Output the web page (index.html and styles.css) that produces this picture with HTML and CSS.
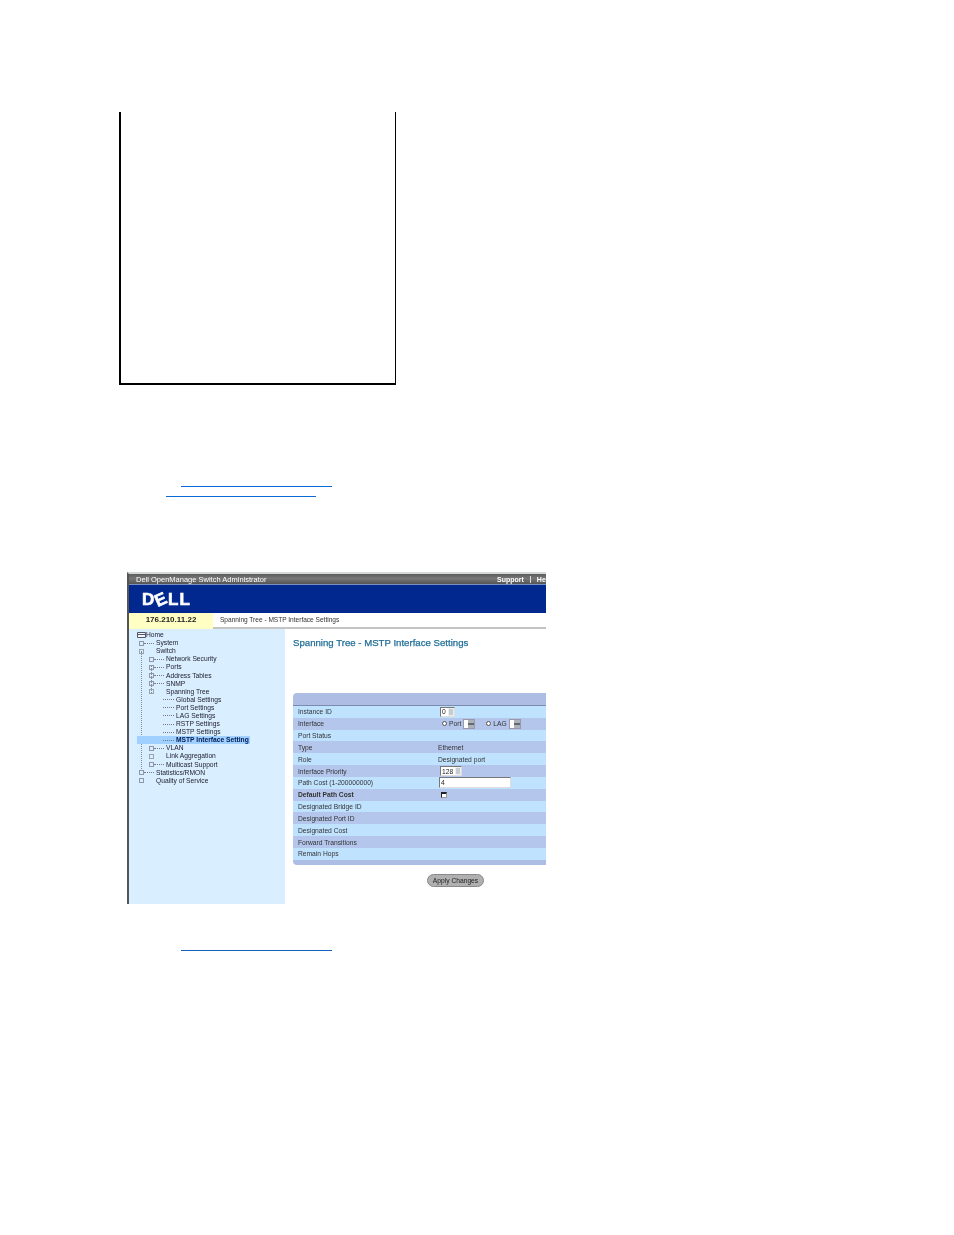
FILE: index.html
```html
<!DOCTYPE html>
<html lang="en">
<head>
<meta charset="utf-8">
<title>Spanning Tree - MSTP Interface Settings</title>
<link rel="stylesheet" href="styles.css">
</head>
<body>
<div class="box"></div>
<a class="rule rule-a" href="#top"></a>
<a class="rule rule-b" href="#top"></a>
<div class="shot">
  <div class="titlebar">
    <span>Dell OpenManage Switch Administrator</span>
    <span class="support">Support <i class="sep"></i> Help</span>
  </div>
  <div class="brand"><span class="logo">D<span class="logo-e">E</span>LL</span></div>
  <div class="crumbrow">
    <div class="ip">176.210.11.22</div>
    <div class="crumb">Spanning Tree - MSTP Interface Settings</div>
  </div>
  <div class="workspace">
    <nav class="tree">
      <i class="vline vline-a"></i>
      <i class="vline vline-b"></i>
      <div class="node home"><svg class="folder" width="9" height="6" viewBox="0 0 9 6"><path d="M.5.5h8v5h-8z" fill="#eef6ff" stroke="#556"/><path d="M.5 2.5h8" stroke="#556"/></svg>Home</div>
      <div class="node l1"><i class="plus"></i><i class="dash"></i>System</div>
      <div class="node l1"><i class="plus open"></i><i class="gap"></i>Switch</div>
      <div class="node l2"><i class="plus"></i><i class="dash"></i>Network Security</div>
      <div class="node l2"><i class="plus"></i><i class="dash"></i>Ports</div>
      <div class="node l2"><i class="plus"></i><i class="dash"></i>Address Tables</div>
      <div class="node l2"><i class="plus"></i><i class="dash"></i>SNMP</div>
      <div class="node l2"><i class="plus open"></i><i class="gap"></i>Spanning Tree</div>
      <div class="node l3"><i class="dash long"></i>Global Settings</div>
      <div class="node l3"><i class="dash long"></i>Port Settings</div>
      <div class="node l3"><i class="dash long"></i>LAG Settings</div>
      <div class="node l3"><i class="dash long"></i>RSTP Settings</div>
      <div class="node l3"><i class="dash long"></i>MSTP Settings</div>
      <div class="node l3 current"><i class="dash long"></i>MSTP Interface Setting</div>
      <div class="node l2"><i class="plus"></i><i class="dash"></i>VLAN</div>
      <div class="node l2"><i class="plus open"></i><i class="gap"></i>Link Aggregation</div>
      <div class="node l2"><i class="plus"></i><i class="dash"></i>Multicast Support</div>
      <div class="node l1"><i class="plus"></i><i class="dash"></i>Statistics/RMON</div>
      <div class="node l1"><i class="plus"></i><i class="gap"></i>Quality of Service</div>
    </nav>
    <main class="content">
      <h1 class="heading">Spanning Tree - MSTP Interface Settings</h1>
      <section class="panel">
        <div class="panel-head"></div>
        <div class="row"><span class="label">Instance ID</span><span class="value"><span class="spin">0<i class="arrow"></i></span></span></div>
        <div class="row alt"><span class="label">Interface</span><span class="value"><i class="radio"></i>Port<i class="select"></i><i class="radio second"></i>LAG<i class="select"></i></span></div>
        <div class="row"><span class="label">Port Status</span><span class="value"></span></div>
        <div class="row alt"><span class="label">Type</span><span class="value">Ethernet</span></div>
        <div class="row"><span class="label">Role</span><span class="value">Designated port</span></div>
        <div class="row alt"><span class="label">Interface Priority</span><span class="value"><span class="spin">128<i class="arrow"></i></span></span></div>
        <div class="row"><span class="label">Path Cost (1-200000000)</span><span class="value"><span class="field">4</span></span></div>
        <div class="row alt"><span class="label bold">Default Path Cost</span><span class="value"><i class="check"></i></span></div>
        <div class="row"><span class="label">Designated Bridge ID</span><span class="value"></span></div>
        <div class="row alt"><span class="label">Designated Port ID</span><span class="value"></span></div>
        <div class="row"><span class="label">Designated Cost</span><span class="value"></span></div>
        <div class="row alt"><span class="label">Forward Transitions</span><span class="value"></span></div>
        <div class="row"><span class="label">Remain Hops</span><span class="value"></span></div>
        <div class="panel-foot"></div>
      </section>
      <div class="actions"><button class="apply" type="button">Apply Changes</button></div>
    </main>
  </div>
</div>
<a class="rule rule-c" href="#top"></a>
</body>
</html>
```

FILE: styles.css
```css
* { box-sizing: border-box; }
html, body { margin: 0; padding: 0; background: #fff; }
body { height: 1235px; overflow: hidden; font-family: "Liberation Sans", Arial, sans-serif; }

.box {
  width: 277px;
  height: 273px;
  margin: 112px 0 0 119px;
  border: solid #000;
  border-width: 0 1.5px 2px 2px;
}

.rule { display: block; height: 1px; background: #0a6ad8; }
.rule-a { width: 151px; margin: 101px 0 0 181px; }
.rule-b { width: 150px; margin: 9px 0 0 166px; }
.rule-c { width: 151px; margin: 46px 0 0 181px; background: #1560b8; }

.shot {
  width: 419px;
  height: 332px;
  margin: 75px 0 0 127px;
  overflow: hidden;
  border-top: 2px solid #d4d8d8;
  border-left: 2px solid #555;
  filter: blur(.4px);
  display: flex;
  flex-direction: column;
}

.titlebar {
  height: 10px;
  flex: none;
  display: flex;
  justify-content: space-between;
  align-items: center;
  padding-left: 7px;
  background: linear-gradient(#5d5d5d, #777 45%, #555);
  color: #fff;
  font-size: 7.5px;
  white-space: nowrap;
}
.support { margin-right: -6px; font-weight: bold; font-size: 7px; }
.sep { display: inline-block; width: 1px; height: 7px; margin: 0 4px; background: #ddd; vertical-align: -1px; }

.brand {
  height: 29px;
  flex: none;
  display: flex;
  align-items: center;
  padding-left: 13px;
  background: #00288f;
  border-top: 1px solid #7d8fc0;
}
.logo { color: #fff; font-size: 17px; font-weight: 900; letter-spacing: 1.2px; line-height: 1; -webkit-text-stroke: .6px #fff; }
.logo-e { display: inline-block; transform: rotate(-24deg); }

.crumbrow { height: 16px; flex: none; display: flex; }
.ip {
  width: 84px;
  background: #ffffc4;
  text-align: center;
  font-size: 8px;
  font-weight: bold;
  line-height: 13px;
  color: #222;
}
.crumb {
  flex: 1;
  padding-left: 7px;
  font-size: 6.55px;
  line-height: 14px;
  color: #333;
  border-bottom: 2px solid #c4c4c4;
}

.workspace { flex: 1; display: flex; min-height: 0; }

.tree {
  width: 156px;
  flex: none;
  padding-top: 2px;
  background: #d9eeff;
  position: relative;
  font-size: 6.7px;
  color: #223;
}
.vline { position: absolute; width: 0; border-left: 1px dotted #889; }
.vline-a { left: 12px; top: 22px; height: 120px; }
.vline-b { left: 22px; top: 36px; height: 28px; }

.node { height: 8.1px; line-height: 8px; display: flex; align-items: center; white-space: nowrap; position: relative; }
.home { padding-left: 8px; }
.folder { flex: none; }
.l1 { padding-left: 10px; }
.l2 { padding-left: 20px; }
.l3 { padding-left: 34px; }
.current { margin-left: 8px; padding-left: 26px; width: 113px; background: #9fd0ff; font-weight: bold; color: #001a55; }

.plus { width: 5px; height: 5px; flex: none; border: 1px solid #8f98a8; background: transparent; }
.plus.open { border-color: #9aa3b0; }
.dash { width: 10px; height: 0; margin: 0 2px 0 0; flex: none; border-top: 1px dotted #778; }
.dash.long { width: 11px; margin-right: 2px; }
.gap { width: 12px; flex: none; }

.content { flex: 1; min-width: 0; background: #fff; padding-left: 8px; }
.heading {
  margin: 8px 0 0;
  font-size: 9.65px;
  line-height: 12px;
  font-weight: normal;
  color: #1f6e96;
  -webkit-text-stroke: .25px #1f6e96;
  white-space: nowrap;
}

.panel {
  width: 270px;
  margin-top: 44px;
  border-radius: 4px 0 0 4px;
  overflow: hidden;
  font-size: 6.7px;
  color: #333;
}
.panel-head { height: 13px; background: #adbde4; border-bottom: 1px solid #7b8bb0; }
.panel-foot { height: 5px; background: #adbde4; }

.row { height: 11.83px; display: flex; align-items: center; background: #bfe3ff; }
.row.alt { background: #b4c6ec; }
.label { width: 145px; flex: none; padding-left: 5px; white-space: nowrap; }
.bold { font-weight: bold; }
.value { display: flex; align-items: center; white-space: nowrap; }

.spin, .field {
  display: inline-flex;
  align-items: center;
  background: #fff;
  height: 10px;
  margin-left: 2px;
  border: 1px solid #777;
  border-right-color: #ddd;
  border-bottom-color: #ddd;
  padding-left: 1px;
  color: #222;
}
.arrow {
  width: 6px;
  height: 8px;
  margin-left: 2px;
  border: 1px solid #eee;
  background: linear-gradient(#c4cdd2 42%, #778 42%, #778 58%, #c4cdd2 58%);
}
.field { width: 72px; height: 11px; margin-left: 1px; }
.radio { width: 5px; height: 5px; margin: 0 2px 0 4px; border-radius: 50%; background: #fff; border: 1px solid #555; }
.radio.second { margin-left: 11px; }
.select {
  width: 12px;
  height: 10px;
  margin-left: 2px;
  border: 1px solid #99a;
  background:
    linear-gradient(90deg, #fff 4px, transparent 4px),
    linear-gradient(#aab4b8 42%, #667 42%, #667 58%, #aab4b8 58%);
}
.check { width: 6px; height: 6px; margin-left: 3px; background: #fff; border: solid #222; border-width: 2px 1px 1px 1px; border-right-color: #999; border-bottom-color: #999; }

.actions { width: 270px; display: flex; padding: 9px 0 0 134px; }
.apply {
  width: 57px;
  height: 13px;
  padding: 0;
  border: 1px solid #8a8a8a;
  border-radius: 7px;
  background: #b0b0b0;
  font: 6.7px "Liberation Sans", Arial, sans-serif;
  color: #222;
}
```
